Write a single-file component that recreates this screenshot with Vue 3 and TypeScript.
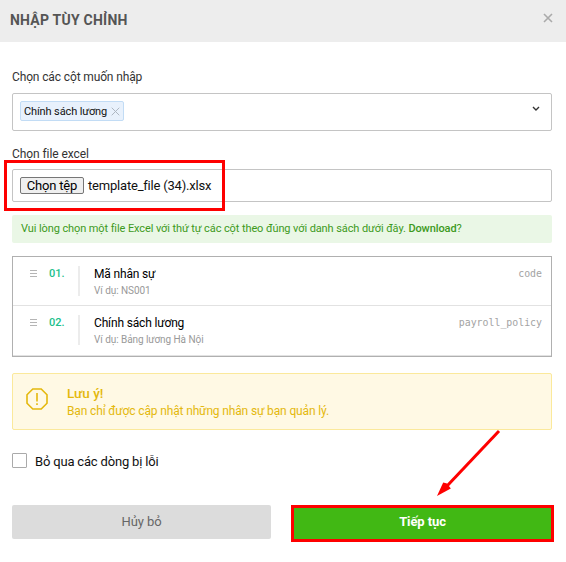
<script setup lang="ts">
import { ref } from 'vue'

interface Column {
  index: string
  title: string
  example: string
  code: string
}

const columns: Column[] = [
  { index: '01.', title: 'Mã nhân sự', example: 'NS001', code: 'code' },
  { index: '02.', title: 'Chính sách lương', example: 'Bảng lương Hà Nội', code: 'payroll_policy' },
]
const selected = ref<string[]>(['Chính sách lương'])
const fileName = ref('template_file (34).xlsx')
const skipErrors = ref(false)

function removeTag(tag: string): void {
  selected.value = selected.value.filter((t) => t !== tag)
}
</script>

<template>
  <div class="dialog">
    <header class="header">
      <h1 class="title">NHẬP TÙY CHỈNH</h1>
      <svg class="close" width="10" height="10" viewBox="0 0 10 10"><path d="M1 1l8 8M9 1L1 9" /></svg>
    </header>

    <main class="body">
      <div class="label"><span>Chọn các cột muốn nhập</span></div>
      <div class="select">
        <span v-for="tag in selected" :key="tag" class="tag">
          <span class="tag-text">{{ tag }}</span>
          <svg width="9" height="9" viewBox="0 0 9 9" @click="removeTag(tag)"><path d="M.7.7l7.6 7.6M8.3.7L.7 8.3" /></svg>
        </span>
        <svg class="chevron" width="8" height="6" viewBox="0 0 8 6"><path d="M1 1l3 3 3-3" /></svg>
      </div>

      <div class="label file-label"><span>Chọn file excel</span></div>
      <div class="file">
        <button class="file-button" type="button"><span>Chọn tệp</span></button>
        <span class="file-name">{{ fileName }}</span>
        <div class="file-mark"></div>
      </div>

      <div class="hint"><span>Vui lòng chọn một file Excel với thứ tự các cột theo đúng với danh sách dưới đây. <b>Download</b>?</span></div>

      <div class="list">
        <div v-for="col in columns" :key="col.code" class="row">
          <svg class="grip" width="7" height="8" viewBox="0 0 7 8"><path d="M0 .5h7M0 3.500h7M0 6.500h7" /></svg>
          <span class="index">{{ col.index }}</span>
          <div class="info">
            <div class="name">{{ col.title }}</div>
            <div class="example">Ví dụ: {{ col.example }}</div>
          </div>
          <span class="code">{{ col.code }}</span>
        </div>
      </div>

      <div class="warning">
        <svg class="warning-icon" width="22" height="22" viewBox="0 0 22 22">
          <path d="M6.8 1h8.4L21 6.8v8.4L15.2 21H6.8L1 15.2V6.8z" />
          <path d="M11 5v8.500M11 15.2v1.8" />
        </svg>
        <div>
          <div class="warning-title">Lưu ý!</div>
          <div class="warning-text">Bạn chỉ được cập nhật những nhân sự bạn quản lý.</div>
        </div>
      </div>

      <label class="skip">
        <input v-model="skipErrors" class="checkbox" type="checkbox" />
        <span class="skip-text">Bỏ qua các dòng bị lỗi</span>
      </label>

      <div class="actions">
        <button class="cancel" type="button">Hủy bỏ</button>
        <button class="continue" type="button">Tiếp tục</button>
        <svg class="arrow" width="66" height="68" viewBox="0 0 66 68">
          <path class="shaft" d="M62 2L10 57" />
          <path class="head" d="M0 67L6.200 53.500L10 54.500L13.800 59.500z" />
        </svg>
      </div>
    </main>
  </div>
</template>

<style>
body {
  background: #fff;
}
</style>

<style scoped>
.dialog {
  width: 566px;
  height: 562px;
  overflow: hidden;
  background: #fff;
  color: #111;
  font-family: Roboto, 'Liberation Sans', sans-serif;
  font-size: 12px;
}
.dialog * {
  box-sizing: border-box;
}
.header {
  display: flex;
  align-items: flex-start;
  justify-content: space-between;
  height: 42px;
  padding: 12px 13px 0 10px;
  background: #ededed;
}
.title {
  margin: 0;
  color: #555;
  font-size: 14px;
  font-weight: 700;
  line-height: 17px;
  letter-spacing: 0.23px;
}
.close {
  margin-top: 1px;
}
.close path {
  fill: none;
  stroke: #aaa;
  stroke-width: 1.600;
}
.body {
  padding: 26px 14px 0 12px;
}
.label {
  height: 25px;
  color: #333;
  line-height: 18px;
  letter-spacing: -0.13px;
}
.select {
  position: relative;
  display: flex;
  align-items: flex-start;
  justify-content: space-between;
  height: 38px;
  padding: 7px 11px 0 7px;
  border: 1px solid #c4c4c4;
  border-radius: 2px;
}
.tag {
  display: flex;
  align-items: center;
  justify-content: space-between;
  width: 104px;
  height: 20px;
  padding: 0 3px;
  border: 1px solid #c2dcf5;
  border-radius: 2px;
  background: #e8f1fc;
  font-size: 11px;
  letter-spacing: -0.12px;
  white-space: nowrap;
}
.tag svg {
  flex: none;
}
.tag path {
  fill: none;
  stroke: #aeb7c1;
}
.chevron {
  margin-top: 5px;
}
.chevron path {
  fill: none;
  stroke: #333;
  stroke-width: 1.400;
}
.file-label {
  height: 24px;
  margin-top: 14px;
  letter-spacing: -0.07px;
}
.file {
  position: relative;
  display: flex;
  align-items: center;
  gap: 4px;
  height: 33px;
  padding-left: 7px;
  border: 1px solid #c4c4c4;
  border-radius: 2px;
  font-size: 13px;
}
.file-name {
  letter-spacing: -0.2px;
}
.file-button {
  width: 64px;
  height: 17px;
  padding: 0;
  border: 1px solid #767676;
  border-radius: 2px;
  background: #efefef;
  color: #000;
  font: 13px/15px Roboto, sans-serif;
  letter-spacing: -0.2px;
  white-space: nowrap;
}
.file-mark {
  position: absolute;
  top: -10px;
  left: -9px;
  width: 221px;
  height: 51px;
  border: 3px solid #fe0000;
}
.hint {
  height: 28px;
  margin-top: 13px;
  padding-left: 9px;
  border-radius: 2px;
  background: #eaf7e6;
  color: #3d9a1c;
  font-size: 11px;
  line-height: 27px;
  letter-spacing: -0.097px;
  white-space: nowrap;
}
.hint b {
  font-weight: 500;
}
.list {
  height: 101px;
  margin-top: 13px;
  border: 1px solid #b0b0b0;
}
.row {
  display: flex;
  height: 49px;
  padding: 9px 9px 0 17px;
  border-bottom: 1px solid #e2e2e2;
}
.row + .row {
  height: 50px;
}
.grip {
  margin-top: 4px;
}
.grip path {
  fill: none;
  stroke: #b5b5b5;
}
.index {
  width: 29px;
  margin-left: 12px;
  color: #20bf8b;
  font-size: 11px;
  font-weight: 500;
  line-height: 15px;
}
.info {
  height: 30px;
  padding-left: 14px;
  border-left: 2px solid #ececec;
}
.name {
  color: #000;
  line-height: 16px;
  letter-spacing: -0.16px;
}
.example {
  margin-top: 2px;
  color: #999;
  font-size: 10px;
  line-height: 14px;
  letter-spacing: -0.06px;
}
.code {
  margin-left: auto;
  color: #a3a3a3;
  font-family: 'DejaVu Sans Mono', monospace;
  font-size: 9.900px;
  line-height: 15px;
}
.warning {
  display: flex;
  height: 57px;
  margin-top: 16px;
  padding: 10px 13px;
  border: 1px solid #fbe99b;
  border-radius: 2px;
  background: #fff9e4;
  color: #e4b80d;
}
.warning-icon {
  margin: 4px 19px 0 0;
  fill: none;
  stroke: currentColor;
  stroke-width: 1.600;
}
.warning-title {
  font-size: 13.500px;
  font-weight: 500;
  line-height: 18px;
}
.warning-text {
  line-height: 18px;
  letter-spacing: -0.145px;
}
.skip {
  display: flex;
  align-items: center;
  height: 17px;
  margin-top: 22px;
  font-size: 13px;
  letter-spacing: -0.18px;
}
.skip-text {
  padding-top: 1px;
}
.checkbox {
  width: 15px;
  height: 15px;
  margin: 0 8px 0 0;
  border: 1px solid #aaa;
  border-radius: 1px;
  background: #fff;
  appearance: none;
}
.checkbox:checked {
  background: #41b814;
}
.actions {
  position: relative;
  display: flex;
  align-items: flex-start;
  gap: 20px;
  width: 542px;
  margin-top: 36px;
}
.actions button {
  padding: 0;
  font-family: inherit;
  font-size: 13px;
  letter-spacing: -0.1px;
}
.actions .cancel {
  width: 259px;
  height: 34px;
  padding-bottom: 1px;
  border: 0;
  border-radius: 2px;
  background: #dcdcdc;
  color: #666;
}
.actions .continue {
  width: 263px;
  height: 37px;
  padding-bottom: 5px;
  border: 3px solid #fe0000;
  background: #41b814;
  color: #fff;
  font-weight: 700;
}
.arrow {
  position: absolute;
  top: -76px;
  left: 425px;
}
.shaft {
  fill: none;
  stroke: #fe0000;
  stroke-width: 3;
}
.head {
  fill: #fe0000;
}
</style>
